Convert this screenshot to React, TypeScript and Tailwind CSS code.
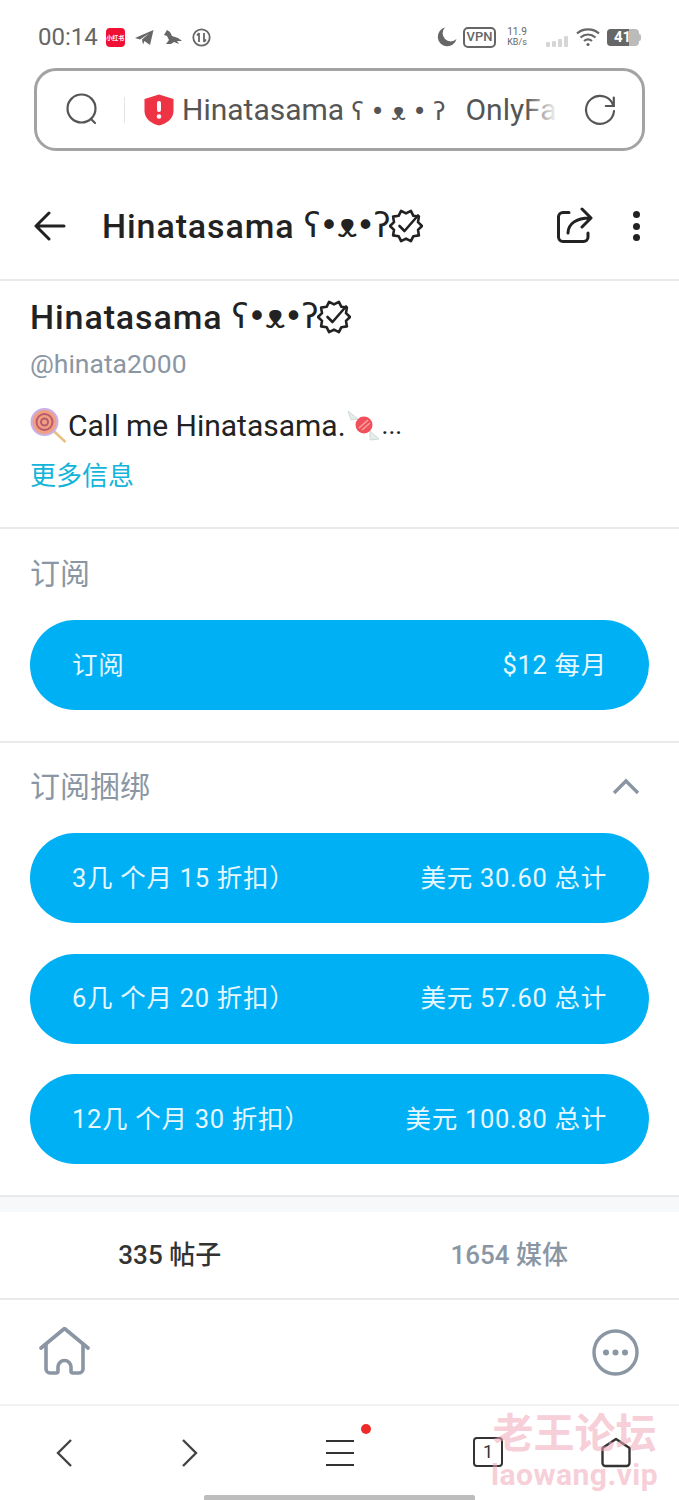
import { ReactNode } from "react"

const cjk = "font-['Roboto','Noto_Sans_CJK_SC',sans-serif]"

function Verified({ size = 34 }: { size?: number }) {
    const points: string[] = []
    for (let i = 0; i < 20; i++) {
        const r = i % 2 === 0 ? 16 : 12.6
        const a = (i * Math.PI) / 10
        points.push(`${(17 + r * Math.cos(a)).toFixed(1)},${(17 + r * Math.sin(a)).toFixed(1)}`)
    }
    return (
        <svg width={size} height={size} viewBox="0 0 34 34" fill="none" stroke="#222" strokeWidth="2.6" strokeLinejoin="round" strokeLinecap="round">
            <polygon points={points.join(" ")} />
            <path d="M10.5 17l5 5L29 6.5" />
        </svg>
    )
}

function Kaomoji() {
    return <span className="font-['DejaVu_Sans',sans-serif] text-[33px] tracking-[-1.5px]">ʕ•ᴥ•ʔ</span>
}

function PriceButton({ left, right }: { left: string; right: string }) {
    return (
        <div className="mx-[30px] flex h-[90px] items-center justify-between rounded-[45px] bg-[#00b0f5] px-[42px] text-[25.5px] tracking-[0.7px] text-[#e6f8ff]">
            <span>{left}</span>
            <span>{right}</span>
        </div>
    )
}

function Section({ children }: { children: ReactNode }) {
    return <div className="border-b-2 border-[#e8eaeb]">{children}</div>
}

export default function App() {
    return (
        <div className={`relative h-[1500px] w-[679px] overflow-hidden bg-white ${cjk}`}>
            {/* status bar */}
            <div className="flex h-[68px] items-center justify-between pl-[38px] pr-[38px] pt-[6px] text-[#666]">
                <div className="flex items-center">
                    <span className="text-[24px]">00:14</span>
                    <div className="ml-[8px] flex h-[19px] w-[19px] items-center justify-center rounded-[4px] bg-[#ee1133] text-[6px] font-bold text-white">小红书</div>
                    <svg className="ml-[10px]" width="19" height="17" viewBox="0 0 19 17" fill="#666">
                        <path d="M0 9L18.5 1L15 16L9.5 12L8 15.5L7 10.5L14 4.5L5 10.5Z" />
                    </svg>
                    <svg className="ml-[9px]" width="20" height="16" viewBox="0 0 20 16" fill="#666">
                        <path d="M1 6L4 1L7 3L9 7L15 9L19 12L14 12L16 15L11 13L8 15L3 15L6 11L4 7Z" />
                    </svg>
                    <svg className="ml-[9px]" width="19" height="19" viewBox="0 0 19 19" fill="none" stroke="#666" strokeWidth="1.8">
                        <circle cx="9.5" cy="9.5" r="8.2" />
                        <path d="M7 5v9M7 5L5 7.5M12 14V5M12 14l2-2.5" />
                    </svg>
                </div>
                <div className="flex items-center">
                    <svg width="20" height="20" viewBox="0 0 20 20" fill="#666">
                        <path d="M8 0.5A9.5 9.5 0 1 0 19.5 12A8 8 0 0 1 8 0.5Z" />
                    </svg>
                    <div className="ml-[6px] flex h-[21px] w-[33px] items-center justify-center rounded-[5px] border-2 border-[#666] text-[13px] font-medium">VPN</div>
                    <div className="ml-[9px] flex w-[24px] flex-col items-center text-[9px] leading-[10px]">
                        <span className="text-[10px]">11.9</span>
                        <span>KB/s</span>
                    </div>
                    <svg className="ml-[17px] mt-[8px]" width="23" height="12" viewBox="0 0 23 12" fill="#d6d6d6">
                        <rect x="0" y="7" width="4" height="5" rx="1" />
                        <rect x="6" y="6" width="4" height="6" rx="1" />
                        <rect x="12" y="4" width="4" height="8" rx="1" />
                        <rect x="18" y="1" width="4" height="11" rx="1" />
                    </svg>
                    <svg className="ml-[7px]" width="24" height="20" viewBox="0 0 24 20" fill="none" stroke="#666" strokeWidth="2.2">
                        <path d="M1 6.5C7 1 17 1 23 6.5M4.5 10.5C9 6.5 15 6.5 19.5 10.5M8 14c2.4-2 5.6-2 8 0" />
                        <circle cx="12" cy="17.5" r="1.6" fill="#666" stroke="none" />
                    </svg>
                    <div className="relative ml-[7px] flex h-[17px] w-[32px] items-center overflow-hidden rounded-[4px] bg-[#bbb]">
                        <div className="absolute inset-y-0 left-0 w-[22px] bg-[#666]" />
                        <span className="relative ml-[7px] text-[15px] font-bold leading-none text-white">41</span>
                    </div>
                    <div className="h-[7px] w-[2px] rounded-r bg-[#bbb]" />
                </div>
            </div>

            {/* address bar */}
            <div className="mx-[34px] flex h-[83px] items-center rounded-[22px] border-[3px] border-[#a3a3a3]">
                <svg className="ml-[29px] shrink-0" width="33" height="33" viewBox="0 0 33 33" fill="none" stroke="#555" strokeWidth="2.2" strokeLinecap="round">
                    <circle cx="15.5" cy="15.5" r="14" />
                    <path d="M25 26l4 4" />
                </svg>
                <div className="ml-[25px] h-[26px] w-[1px] shrink-0 bg-[#e5e5e5]" />
                <svg className="ml-[19px] shrink-0" width="30" height="32" viewBox="0 0 30 32">
                    <path d="M15 0.5L29.5 5V17C29.5 25 22 30 15 31.5C8 30 0.5 25 0.5 17V5Z" fill="#ee3344" />
                    <rect x="13" y="7" width="4" height="11" rx="2" fill="white" />
                    <circle cx="15" cy="22.5" r="2.3" fill="white" />
                </svg>
                <div className="relative ml-[8px] w-[376px] shrink-0 overflow-hidden whitespace-nowrap pt-[3px] text-[30px] leading-[38px] text-[#555]">
                    <span>Hinatasama </span>
                    <span className="font-['DejaVu_Sans',sans-serif] text-[24px] tracking-[-0.5px]">ʕ • ᴥ • ʔ</span>
                    <span className="ml-[13px]"> OnlyFa</span>
                    <div className="absolute inset-y-0 right-0 w-[32px] bg-gradient-to-r from-transparent to-white" />
                </div>
                <svg className="ml-[26px] shrink-0" width="32" height="32" viewBox="0 0 32 32" fill="none" stroke="#555" strokeWidth="2.2" strokeLinecap="round">
                    <path d="M29.5 12A14 14 0 1 0 30 17" />
                    <path d="M29.8 3.5v8.5h-8" />
                </svg>
            </div>

            {/* page header */}
            <Section>
                <div className="flex h-[128px] items-center pt-[22px] text-[#222]">
                    <svg className="ml-[34px]" width="32" height="30" viewBox="0 0 32 30" fill="none" stroke="#222" strokeWidth="3" strokeLinecap="round" strokeLinejoin="round">
                        <path d="M30 15H2M15 2L2 15l13 13" />
                    </svg>
                    <div className="ml-[36px] flex items-center text-[34px] font-medium tracking-[0.9px]">
                        <span>Hinatasama&nbsp;</span>
                        <Kaomoji />
                        <Verified />
                    </div>
                    <svg className="ml-auto" width="38" height="38" viewBox="0 0 38 38" fill="none" stroke="#222" strokeWidth="3" strokeLinecap="round" strokeLinejoin="round">
                        <path d="M13 5.5H7a4.5 4.5 0 0 0-4.5 4.5v20a4.5 4.5 0 0 0 4.5 4.5h20.5a4.5 4.5 0 0 0 4.5-4.5v-4" />
                        <path d="M12 26c0-9 8-15 22-15M26 2l9 9-9 9" />
                    </svg>
                    <div className="ml-[39px] mr-[39px] flex flex-col gap-[4.5px]">
                        <div className="h-[7px] w-[7px] rounded-full bg-[#222]" />
                        <div className="h-[7px] w-[7px] rounded-full bg-[#222]" />
                        <div className="h-[7px] w-[7px] rounded-full bg-[#222]" />
                    </div>
                </div>
            </Section>

            {/* profile */}
            <Section>
                <div className="h-[246px] pl-[30px] pr-[31px] pt-[14px]">
                    <div className="flex h-[44px] items-center text-[34px] font-medium tracking-[0.9px] text-[#222]">
                        <span>Hinatasama&nbsp;</span>
                        <Kaomoji />
                        <Verified />
                    </div>
                    <div className="mt-[9px] text-[26.5px] leading-[32px] text-[#8a96a3]">@hinata2000</div>
                    <div className="mt-[27px] flex h-[36px] items-center text-[30px] text-[#222]">
                        <svg width="38" height="35" viewBox="0 0 37 35" fill="none">
                            <path d="M22 22l13 12" stroke="#e8c080" strokeWidth="2.5" />
                            <circle cx="14" cy="14" r="13" fill="#f0a080" stroke="#c8b0e8" strokeWidth="2" />
                            <circle cx="14" cy="14" r="8" fill="none" stroke="#b85a70" strokeWidth="2" />
                            <circle cx="14" cy="14" r="3.5" fill="none" stroke="#b85a70" strokeWidth="2" />
                        </svg>
                        <span>Call me Hinatasama.</span>
                        <svg width="36" height="36" viewBox="0 0 36 36" fill="none">
                            <path d="M12 12L2 4l3 9zM24 24l9 8-9 1z" fill="#e3eeea" stroke="#cfdcd8" />
                            <circle cx="18" cy="18" r="8.5" fill="#f0505c" />
                            <path d="M13 21l9-8M16 23l8-7" stroke="#f9a0a0" strokeWidth="1.5" />
                        </svg>
                        <span className="text-[26px]">...</span>
                    </div>
                    <div className="mt-[16px] text-[26px] leading-[34px] text-[#12b4da]">更多信息</div>
                </div>
            </Section>

            {/* subscribe */}
            <Section>
                <div className="h-[212px] pt-[25px]">
                    <div className="h-[40px] pl-[30px] text-[30px] leading-[40px] text-[#8a96a3]">订阅</div>
                    <div className="mt-[26px]">
                        <PriceButton left="订阅" right="$12 每月" />
                    </div>
                </div>
            </Section>

            {/* bundles */}
            <Section>
                <div className="h-[452px] pt-[23px]">
                    <div className="flex h-[40px] items-center justify-between pl-[30px] pr-[39px] text-[30px] text-[#8a96a3]">
                        <span>订阅捆绑</span>
                        <svg width="28" height="17" viewBox="0 0 28 17" fill="none" stroke="#8a96a3" strokeWidth="3.4">
                            <path d="M2 15L14 3l12 12" />
                        </svg>
                    </div>
                    <div className="mt-[27px] flex flex-col gap-[30.5px]">
                        <PriceButton left="3几 个月 15 折扣）" right="美元 30.60 总计" />
                        <PriceButton left="6几 个月 20 折扣）" right="美元 57.60 总计" />
                        <PriceButton left="12几 个月 30 折扣）" right="美元 100.80 总计" />
                    </div>
                </div>
            </Section>

            <div className="h-[15px] bg-[#f7f8f9]" />

            {/* tabs */}
            <Section>
                <div className="grid h-[86px] grid-cols-2 items-center text-center text-[26px] font-medium">
                    <span className="text-[#333]">335 帖子</span>
                    <span className="text-[#8a96a3]">1654 媒体</span>
                </div>
            </Section>

            {/* site bottom bar */}
            <div className="flex h-[106px] items-center justify-between border-b-2 border-[#f0f1f2] pl-[39px] pr-[40px]">
                <svg className="-mt-[3px]" width="51" height="48" viewBox="0 0 51 48" fill="none" stroke="#8a96a3" strokeWidth="3.6" strokeLinecap="round" strokeLinejoin="round">
                    <path d="M2 21L25.5 1.5 49 21" />
                    <path d="M7 17v25a4 4 0 0 0 4 4h6a2 2 0 0 0 2-2v-4a6.5 6.5 0 0 1 13 0v4a2 2 0 0 0 2 2h6a4 4 0 0 0 4-4V17" />
                </svg>
                <svg width="47" height="47" viewBox="0 0 47 47" fill="none">
                    <circle cx="23.5" cy="23.5" r="21.5" stroke="#8a96a3" strokeWidth="3.4" />
                    <circle cx="14" cy="23.5" r="3" fill="#8a96a3" />
                    <circle cx="23.5" cy="23.5" r="3" fill="#8a96a3" />
                    <circle cx="33" cy="23.5" r="3" fill="#8a96a3" />
                </svg>
            </div>

            {/* browser nav */}
            <div className="flex h-[94px] items-center">
                <svg className="ml-[56px]" width="16" height="28" viewBox="0 0 16 28" fill="none" stroke="#444" strokeWidth="2.4">
                    <path d="M15 1L2 14l13 13" />
                </svg>
                <svg className="ml-[110px]" width="16" height="28" viewBox="0 0 16 28" fill="none" stroke="#444" strokeWidth="2.4">
                    <path d="M1 1l13 13L1 27" />
                </svg>
                <div className="relative ml-[128px] flex w-[28px] flex-col gap-[9.6px]">
                    <div className="h-[2.4px] bg-[#333]" />
                    <div className="h-[2.4px] bg-[#333]" />
                    <div className="h-[2.4px] bg-[#333]" />
                    <div className="absolute -right-[17px] -top-[16px] h-[10px] w-[10px] rounded-full bg-[#ee2a2a]" />
                </div>
                <div className="-mt-[3px] ml-[119px] flex h-[30px] w-[30px] items-center justify-center rounded-[4px] border-2 border-[#333] text-[18px] leading-none text-[#333]">1</div>
                <svg className="-mt-[2px] ml-[98px]" width="30" height="31" viewBox="0 0 30 31" fill="none" stroke="#333" strokeWidth="2.4" strokeLinejoin="round">
                    <path d="M1.5 11L15 2l13.5 9v15a3 3 0 0 1-3 3h-21a3 3 0 0 1-3-3z" />
                </svg>
            </div>

            {/* gesture bar */}
            <div className="absolute bottom-0 left-[204px] h-[5px] w-[271px] rounded-t-[2px] bg-[#bdbdbd]" />

            {/* watermark */}
            <div className="pointer-events-none absolute left-[491px] top-[1410px] flex flex-col items-center text-[#f2a9b9] opacity-55">
                <span className="text-[41px] font-bold leading-[48px]">老王论坛</span>
                <span className="text-[30px] font-bold leading-[34px] tracking-[0.5px]">laowang.vip</span>
            </div>
        </div>
    )
}
